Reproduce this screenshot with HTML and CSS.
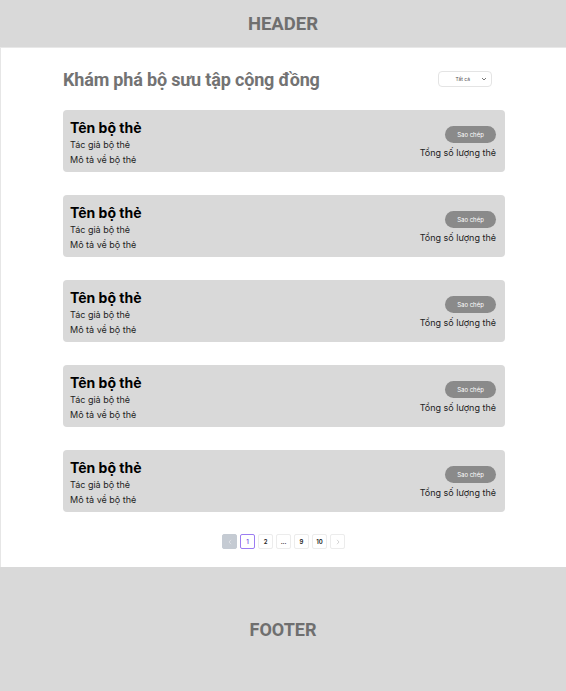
FILE: index.html
```html
<!DOCTYPE html>
<html lang="vi">
<head>
<meta charset="utf-8">
<link rel="stylesheet" href="styles.css">
</head>
<body>
<header class="header">HEADER</header>
<main class="main">
  <div class="top">
    <h1 class="title">Khám phá bộ sưu tập cộng đồng</h1>
    <div class="select">
      <span>Tất cả</span>
      <svg width="6" height="4" viewBox="0 0 6 4"><path d="M1 1l2 2 2-2" fill="none" stroke="#555" stroke-width="0.8"/></svg>
    </div>
  </div>
  <div class="list">
    <div class="card">
      <div class="info"><div class="name">Tên bộ thẻ</div><div class="meta">Tác giả bộ thẻ</div><div class="meta">Mô tả về bộ thẻ</div></div>
      <div class="side"><button class="copy">Sao chép</button><div class="meta">Tổng số lượng thẻ</div></div>
    </div>
    <div class="card">
      <div class="info"><div class="name">Tên bộ thẻ</div><div class="meta">Tác giả bộ thẻ</div><div class="meta">Mô tả về bộ thẻ</div></div>
      <div class="side"><button class="copy">Sao chép</button><div class="meta">Tổng số lượng thẻ</div></div>
    </div>
    <div class="card">
      <div class="info"><div class="name">Tên bộ thẻ</div><div class="meta">Tác giả bộ thẻ</div><div class="meta">Mô tả về bộ thẻ</div></div>
      <div class="side"><button class="copy">Sao chép</button><div class="meta">Tổng số lượng thẻ</div></div>
    </div>
    <div class="card">
      <div class="info"><div class="name">Tên bộ thẻ</div><div class="meta">Tác giả bộ thẻ</div><div class="meta">Mô tả về bộ thẻ</div></div>
      <div class="side"><button class="copy">Sao chép</button><div class="meta">Tổng số lượng thẻ</div></div>
    </div>
    <div class="card">
      <div class="info"><div class="name">Tên bộ thẻ</div><div class="meta">Tác giả bộ thẻ</div><div class="meta">Mô tả về bộ thẻ</div></div>
      <div class="side"><button class="copy">Sao chép</button><div class="meta">Tổng số lượng thẻ</div></div>
    </div>
  </div>
  <nav class="pager">
    <span class="pg prev"><svg width="4" height="6" viewBox="0 0 4 6"><path d="M3 0.8L1 3l2 2.2" fill="none" stroke="#e4e6ea" stroke-width="0.8"/></svg></span>
    <span class="pg active">1</span>
    <span class="pg">2</span>
    <span class="pg">...</span>
    <span class="pg">9</span>
    <span class="pg">10</span>
    <span class="pg next"><svg width="4" height="6" viewBox="0 0 4 6"><path d="M1 0.8L3 3l-2 2.2" fill="none" stroke="#c9c9c9" stroke-width="0.8"/></svg></span>
  </nav>
</main>
<footer class="footer">FOOTER</footer>
</body>
</html>
```
FILE: styles.css
```css
* { box-sizing: border-box; }
html, body { margin: 0; padding: 0; background: #fff; }
body { font-family: Inter, "Noto Sans", sans-serif; }
.header {
  height: 48px;
  background: #d9d9d9;
  display: flex;
  align-items: center;
  justify-content: center;
  font-family: Roboto, sans-serif;
  font-weight: 700;
  font-size: 18.5px;
  color: #6f6f6f;
  border-bottom: 1px solid #e8e8e8;
}
.main {
  border-left: 1px solid #e6e6e6;
  padding: 0 61px 0 62px;
  height: 519px;
}
.top {
  display: flex;
  align-items: center;
  justify-content: space-between;
  padding: 0 13px 0 0;
  height: 62px;
}
.title {
  margin: 0;
  font-family: Roboto, sans-serif;
  font-weight: 700;
  font-size: 18px;
  color: #737373;
  letter-spacing: -0.17px;
}
.select {
  width: 54px;
  height: 16px;
  border: 1px solid #e4e4e4;
  border-radius: 4px;
  display: flex;
  align-items: center;
  justify-content: flex-end;
  gap: 11px;
  padding-right: 4px;
  font-size: 5px;
  color: #555;
}
.list {
  display: flex;
  flex-direction: column;
  gap: 23px;
}
.card {
  height: 62px;
  background: #d9d9d9;
  border-radius: 4px;
  display: flex;
  justify-content: space-between;
  padding: 8px 9px 0 7px;
  color: #1a1a1a;
}
.name {
  font-size: 14px;
  font-weight: 700;
  color: #000;
  line-height: 19px;
}
.meta {
  font-size: 9px;
  line-height: 15px;
  color: #222;
}
.info .meta:first-of-type { margin-top: 1px; }
.side {
  display: flex;
  flex-direction: column;
  align-items: flex-end;
  padding-top: 8px;
  gap: 2px;
}
.copy {
  width: 51px;
  height: 17px;
  border: 0;
  border-radius: 9px;
  background: #8a8a8a;
  color: #fff;
  font-family: Inter, sans-serif;
  font-size: 6px;
  padding: 0;
}
.pager {
  display: flex;
  justify-content: center;
  gap: 3px;
  margin-top: 22px;
  padding-right: 1px;
}
.pg {
  width: 15px;
  height: 15px;
  border: 1px solid #ececec;
  border-radius: 2px;
  display: flex;
  align-items: center;
  justify-content: center;
  font-size: 6px;
  font-weight: 600;
  color: #222;
}
.pg.prev { background: #c5cbd3; border-color: #c5cbd3; }
.pg.active { border-color: #9b7cf2; color: #7b55e8; }
.footer {
  height: 124px;
  background: #d9d9d9;
  display: flex;
  align-items: center;
  justify-content: center;
  font-family: Roboto, sans-serif;
  font-weight: 700;
  font-size: 18px;
  color: #6f6f6f;
}
```
